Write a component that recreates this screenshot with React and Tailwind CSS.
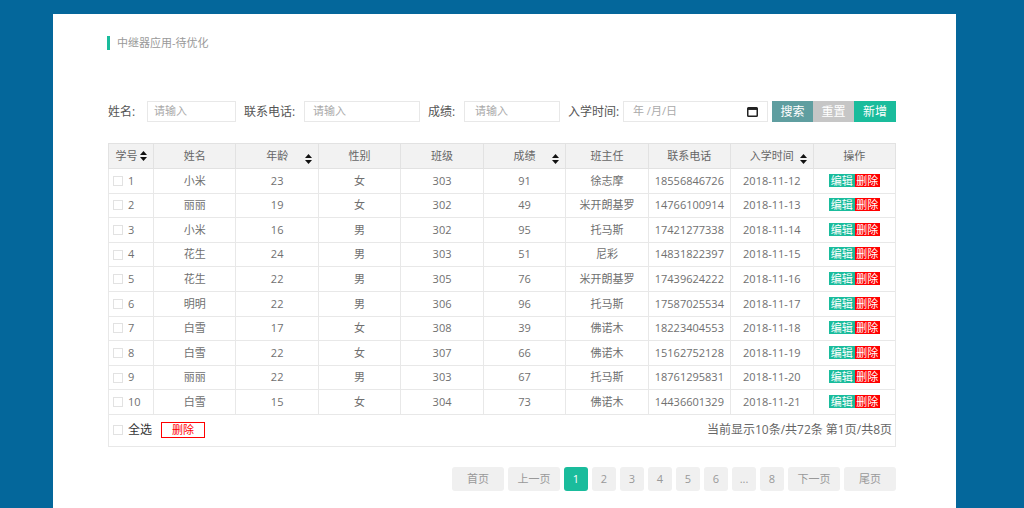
import React from "react";

const rows = [
  [1, "小米", 23, "女", 303, 91, "徐志摩", "18556846726", "2018-11-12"],
  [2, "丽丽", 19, "女", 302, 49, "米开朗基罗", "14766100914", "2018-11-13"],
  [3, "小米", 16, "男", 302, 95, "托马斯", "17421277338", "2018-11-14"],
  [4, "花生", 24, "男", 303, 51, "尼彩", "14831822397", "2018-11-15"],
  [5, "花生", 22, "男", 305, 76, "米开朗基罗", "17439624222", "2018-11-16"],
  [6, "明明", 22, "男", 306, 96, "托马斯", "17587025534", "2018-11-17"],
  [7, "白雪", 17, "女", 308, 39, "佛诺木", "18223404553", "2018-11-18"],
  [8, "白雪", 22, "女", 307, 66, "佛诺木", "15162752128", "2018-11-19"],
  [9, "丽丽", 22, "男", 303, 67, "托马斯", "18761295831", "2018-11-20"],
  [10, "白雪", 15, "女", 304, 73, "佛诺木", "14436601329", "2018-11-21"],
];

function SortIcon() {
  return (
    <svg width="7" height="10" viewBox="0 0 7 10" className="inline-block">
      <polygon points="0,4 3.5,0 7,4" fill="#111" />
      <polygon points="0,6 3.5,10 7,6" fill="#111" />
    </svg>
  );
}

function Box() {
  return <span className="inline-block shrink-0 w-[10px] h-[10px] border border-[#e2e2e2] bg-white" />;
}

const font = { fontFamily: '"Open Sans", "Noto Sans CJK SC", sans-serif' };

export default function App() {
  const cell = "border border-[#e8e8e8] text-center text-[11px] text-[#707070] p-0 whitespace-nowrap";
  const th = "border border-[#e2e2e2] bg-[#f2f2f2] text-center text-[11px] text-[#666] font-normal p-0 whitespace-nowrap";
  const label = "shrink-0 whitespace-nowrap";
  const input = "shrink-0 h-[21px] border border-[#e8e8e8] flex items-center text-[11px] text-[#aaa]";
  return (
    <div
      className="w-[1024px] h-[508px] bg-[#04679b] pl-[53px] pr-[68px] pt-[14px] overflow-hidden"
      style={font}
    >
      <div className="bg-white h-full pl-[54px] pr-[60px] pt-[22px]">
        <div className="flex items-center h-[14px]">
          <span className="w-[3px] h-[14px] bg-[#1abc9c]" />
          <span className="ml-[7px] text-[11px] text-[#999] leading-none -mt-[1px]">中继器应用-待优化</span>
        </div>

        <div className="mt-[51px] ml-[1px] flex items-center h-[21px] text-[12px] text-[#555]">
          <span className={label + " w-[39px]"}>姓名:</span>
          <div className={input + " w-[89px] pl-[6px]"}>请输入</div>
          <span className={label + " ml-[8px] w-[60px]"}>联系电话:</span>
          <div className={input + " w-[116px] pl-[8px]"}>请输入</div>
          <span className={label + " ml-[8px] w-[36px]"}>成绩:</span>
          <div className={input + " w-[96px] pl-[10px]"}>请输入</div>
          <span className={label + " ml-[8px] w-[55px]"}>入学时间:</span>
          <div className={input + " w-[145px] justify-between pl-[9px] pr-[9px] text-[#999]"}>
            <span>年 /月/日</span>
            <svg width="11" height="11" viewBox="0 0 11 11">
              <rect x="0.75" y="1.75" width="9.5" height="8.5" rx="0.8" fill="none" stroke="#222" strokeWidth="1.5" />
              <rect x="0.75" y="1.75" width="9.5" height="2.2" fill="#222" />
            </svg>
          </div>
          <div className="shrink-0 ml-[4px] flex h-[21px] text-[12px] text-white">
            <span className="w-[41px] bg-[#5f9ea0] flex items-center justify-center">搜索</span>
            <span className="w-[41px] bg-[#c6c6c6] flex items-center justify-center">重置</span>
            <span className="w-[42px] bg-[#1abc9c] flex items-center justify-center">新增</span>
          </div>
        </div>

        <table className="mt-[21px] ml-[1px] w-[788px] table-fixed border-collapse">
          <colgroup>
            <col className="w-[45px]" />
            {Array.from({ length: 9 }).map((_, i) => (
              <col key={i} />
            ))}
          </colgroup>
          <thead>
            <tr className="h-[25px]">
              <th className={th}>
                <span className="inline-flex items-center gap-[2px]">学号<SortIcon /></span>
              </th>
              <th className={th}>姓名</th>
              <th className={th + " relative"}>
                年龄
                <span className="absolute right-[6px] top-[8px] leading-none"><SortIcon /></span>
              </th>
              <th className={th}>性别</th>
              <th className={th}>班级</th>
              <th className={th + " relative"}>
                成绩
                <span className="absolute right-[6px] top-[8px] leading-none"><SortIcon /></span>
              </th>
              <th className={th}>班主任</th>
              <th className={th}>联系电话</th>
              <th className={th + " relative"}>
                入学时间
                <span className="absolute right-[6px] top-[8px] leading-none"><SortIcon /></span>
              </th>
              <th className={th}>操作</th>
            </tr>
          </thead>
          <tbody>
            {rows.map((r) => (
              <tr key={r[0]} className="h-[24.6px]">
                <td className={cell + " text-left"}>
                  <span className="flex items-center pl-[4px] gap-[5px]">
                    <Box />
                    <span>{r[0]}</span>
                  </span>
                </td>
                {r.slice(1).map((v, i) => (
                  <td key={i} className={cell}>{v}</td>
                ))}
                <td className={cell}>
                  <span className="inline-flex h-[13px] text-[11px] text-white leading-none">
                    <span className="w-[26px] bg-[#1abc9c] flex items-center justify-center">编辑</span>
                    <span className="w-[25px] bg-[#ff0000] flex items-center justify-center">删除</span>
                  </span>
                </td>
              </tr>
            ))}
          </tbody>
        </table>
        <div className="ml-[1px] w-[788px] h-[32px] border-x border-b border-[#e8e8e8] flex items-center justify-between pl-[4px] pr-[3px]">
          <div className="flex items-center">
            <Box />
            <span className="ml-[5px] text-[12px] text-[#333]">全选</span>
            <span className="ml-[9px] w-[44px] h-[16px] border border-[#ff0000] text-[#ff0000] text-[11px] flex items-center justify-center">删除</span>
          </div>
          <span className="text-[12px] text-[#666]">当前显示10条/共72条 第1页/共8页</span>
        </div>

        <div className="mt-[20px] ml-[1px] w-[788px] flex justify-end items-center gap-[4px] text-[11px] text-[#999]">
          {["首页", "上一页"].map((t) => (
            <span key={t} className="w-[52px] h-[24px] rounded-[3px] bg-[#f0f0f0] flex items-center justify-center">{t}</span>
          ))}
          <span className="w-[24px] h-[24px] rounded-[3px] bg-[#1abc9c] text-white flex items-center justify-center">1</span>
          {["2", "3", "4", "5", "6", "...", "8"].map((t) => (
            <span key={t} className="w-[24px] h-[24px] rounded-[3px] bg-[#f0f0f0] flex items-center justify-center">{t}</span>
          ))}
          {["下一页", "尾页"].map((t) => (
            <span key={t} className="w-[52px] h-[24px] rounded-[3px] bg-[#f0f0f0] flex items-center justify-center">{t}</span>
          ))}
        </div>
      </div>
    </div>
  );
}
